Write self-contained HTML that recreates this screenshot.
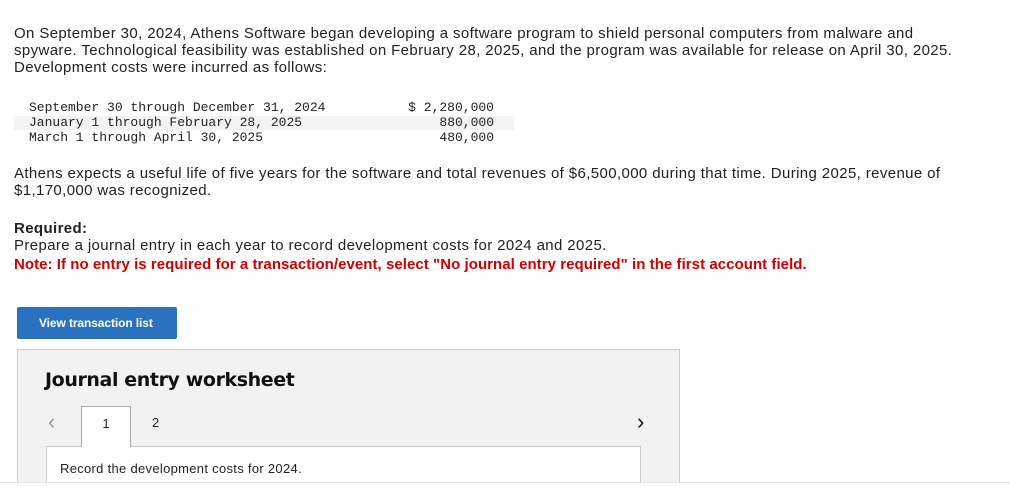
<!DOCTYPE html>
<html><head><style>
body{margin:0;width:1010px;height:489px;overflow:hidden;background:#fff;font-family:"Liberation Sans",sans-serif;color:#222;position:relative}
.p{position:absolute;left:14px;font-size:15px;line-height:17px;margin:0;letter-spacing:0.38px}
.mono{position:absolute;font-family:"Liberation Mono",monospace;font-size:13px;line-height:15px}
</style></head><body>
<p class="p" style="top:25px;width:950px">On September 30, 2024, Athens Software began developing a software program to shield personal computers from malware and spyware. Technological feasibility was established on February 28, 2025, and the program was available for release on April 30, 2025. Development costs were incurred as follows:</p>
<div style="position:absolute;left:14px;top:116px;width:500px;height:14px;background:#f3f3f3"></div>
<div class="mono" style="left:29px;top:100px">September 30 through December 31, 2024<br>January 1 through February 28, 2025<br>March 1 through April 30, 2025</div>
<div class="mono" style="left:360px;top:100px;width:134px;text-align:right">$ 2,280,000<br>880,000<br>480,000</div>
<p class="p" style="top:165px;width:950px">Athens expects a useful life of five years for the software and total revenues of $6,500,000 during that time. During 2025, revenue of $1,170,000 was recognized.</p>
<p class="p" style="top:220px"><b>Required:</b><br>Prepare a journal entry in each year to record development costs for 2024 and 2025.</p>
<p class="p" style="top:256px;color:#c00;font-weight:bold;font-size:15px;letter-spacing:0.05px">Note: If no entry is required for a transaction/event, select "No journal entry required" in the first account field.</p>
<div style="position:absolute;left:17px;top:307px;width:160px;height:32px;background:#2a72c0;border-radius:2px;color:#fff;font-weight:bold;font-size:12px;line-height:32px;text-indent:22px;letter-spacing:-0.1px">View transaction list</div>
<div style="position:absolute;left:17px;top:349px;width:663px;height:140px;background:#f2f2f2;border:1px solid #ccc;box-sizing:border-box"></div>
<div style="position:absolute;left:45px;top:369px;font-size:19px;font-weight:bold;color:#111;font-family:'DejaVu Sans',sans-serif;letter-spacing:-0.4px">Journal entry worksheet</div>
<div style="position:absolute;left:48px;top:409px;font-size:22px;color:#999">&#8249;</div>
<div style="position:absolute;left:637px;top:409px;font-size:22px;color:#111">&#8250;</div>
<div style="position:absolute;left:46px;top:446px;width:595px;height:43px;background:#fff;border:1px solid #ccc;box-sizing:border-box"></div>
<div style="position:absolute;left:81px;top:406px;width:50px;height:41px;background:#fff;border:1px solid #aaa;border-bottom:none;box-sizing:border-box;text-align:center;line-height:34px;font-size:13px">1</div>
<div style="position:absolute;left:152px;top:406px;line-height:34px;font-size:13px">2</div>
<div style="position:absolute;left:60px;top:461px;font-size:13px;color:#222;letter-spacing:0.3px">Record the development costs for 2024.</div>
<div style="position:absolute;left:0;top:482px;width:1010px;height:7px;background:#fff;border-top:1px solid #e6e6e6"></div>
</body></html>
